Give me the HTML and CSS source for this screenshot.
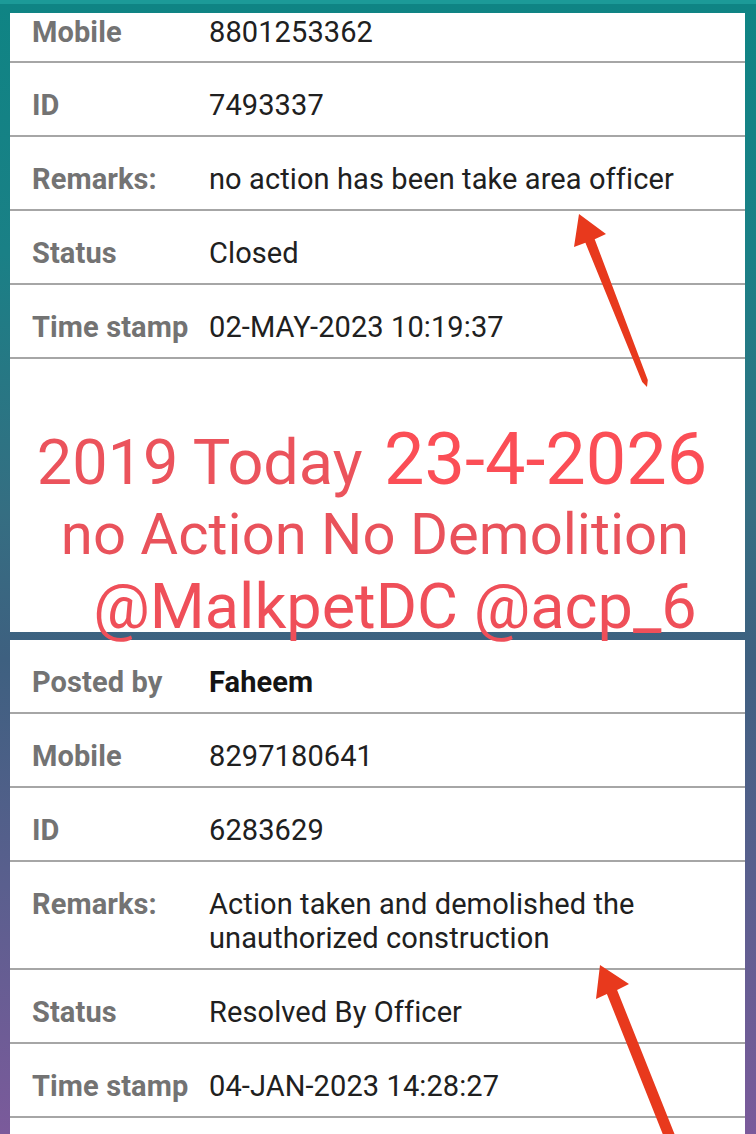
FILE: index.html
```html
<!DOCTYPE html>
<html>
<head>
    <title>Complaint Details</title>
    <link rel="stylesheet" href="styles.css">
</head>
<body>
    <div class="screen">
        <div class="card card-top">
            <div class="row row-cut">
                <span class="label">Mobile</span>
                <span class="value">8801253362</span>
            </div>
            <div class="row">
                <span class="label">ID</span>
                <span class="value">7493337</span>
            </div>
            <div class="row">
                <span class="label">Remarks:</span>
                <span class="value">no action has been take area officer</span>
            </div>
            <div class="row">
                <span class="label">Status</span>
                <span class="value">Closed</span>
            </div>
            <div class="row">
                <span class="label">Time stamp</span>
                <span class="value">02-MAY-2023 10:19:37</span>
            </div>
            <div class="blank"></div>
        </div>

        <div class="card card-bottom">
            <div class="row">
                <span class="label">Posted by</span>
                <span class="value strong">Faheem</span>
            </div>
            <div class="row">
                <span class="label">Mobile</span>
                <span class="value">8297180641</span>
            </div>
            <div class="row">
                <span class="label">ID</span>
                <span class="value">6283629</span>
            </div>
            <div class="row">
                <span class="label">Remarks:</span>
                <span class="value">Action taken and demolished the unauthorized construction</span>
            </div>
            <div class="row">
                <span class="label">Status</span>
                <span class="value">Resolved By Officer</span>
            </div>
            <div class="row">
                <span class="label">Time stamp</span>
                <span class="value">04-JAN-2023 14:28:27</span>
            </div>
        </div>

        <!-- red annotation written over the screenshot -->
        <div class="note">
            <div class="note-line line-one">2019 Today <span class="note-date">23-4-2026</span></div>
            <div class="note-line line-two">no Action No Demolition</div>
            <div class="note-line line-three">@MalkpetDC @acp_6</div>
        </div>

        <svg class="arrows" width="756" height="1134" viewBox="0 0 756 1134">
            <polygon points="579,210 606,230 594.7,235.2 647.8,375.9 647,383 642.2,378.1 585.4,238.8 574,243" />
            <polygon points="600,961 629,980 617.1,986 677.7,1138 667.5,1142 606.9,990 596,995" />
        </svg>
    </div>
</body>
</html>
```

FILE: styles.css
```css
body {
    margin: 0;
    padding: 0;
    font-family: Roboto, "Liberation Sans", sans-serif;
    background: #7a5a9a;
}
.screen {
    position: relative;
    width: 756px;
    height: 1134px;
    overflow: hidden;
    box-sizing: border-box;
    padding: 9px 11px 0 10px;
    display: flex;
    flex-direction: column;
    gap: 8px;
    background: linear-gradient(to bottom, #0f8484 0%, #1a8086 22%, #356e82 45%, #3e6080 58%, #5a5f8e 78%, #7b5a9b 100%);
    border-top: 4px solid #1c9a98;
}
.card {
    background: #fff;
}
.card-bottom {
    flex: 1;
}
.row {
    display: grid;
    grid-template-columns: 177px 1fr;
    padding: 25px 22px 13px;
    border-bottom: 2px solid #a6a6a6;
    font-size: 29px;
    line-height: 34px;
    letter-spacing: 0.1px;
}
.row-cut {
    padding-top: 2px;
    padding-bottom: 12px;
}
.label {
    font-weight: bold;
    color: #737373;
}
.value {
    color: #202020;
}
.value.strong {
    font-weight: bold;
    color: #141414;
}
.blank {
    height: 273px;
}
.note {
    position: absolute;
    top: 421px;
    left: 0;
    right: 0;
    text-align: center;
    color: #eb535c;
}
.note-line {
    white-space: nowrap;
}
.line-one {
    font-size: 63px;
    line-height: 70px;
    padding-right: 12px;
}
.note-date {
    font-size: 72px;
    margin-left: 6px;
    color: #fb4e56;
}
.line-two {
    font-size: 58px;
    line-height: 71px;
    margin-top: 1px;
    padding-right: 6px;
    color: #e9525b;
}
.line-three {
    font-size: 63px;
    line-height: 70px;
    margin-top: 2px;
    padding-left: 34px;
    color: #ef4f59;
}
.arrows {
    position: absolute;
    top: 0;
    left: 0;
}
.arrows polygon {
    fill: #e8391d;
}
```
